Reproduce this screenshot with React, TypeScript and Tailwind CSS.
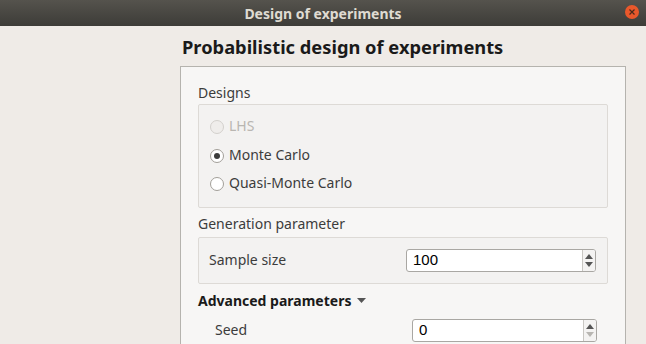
import { useState } from 'react'

const font = { fontFamily: '"Noto Sans", "Open Sans", sans-serif' }

const Radio = ({
  label,
  checked,
  disabled,
  onClick,
}: {
  label: string
  checked?: boolean
  disabled?: boolean
  onClick?: () => void
}) => (
  <div
    className={`flex items-center h-[28.5px] gap-[5px] ${disabled ? 'text-[#b9b6b1]' : 'text-[#3c3c3c] cursor-pointer'}`}
    onClick={disabled ? undefined : onClick}
  >
    <span
      className={`w-[14px] h-[14px] rounded-full border flex items-center justify-center ${
        disabled ? 'border-[#d3d0cc] bg-[#efedeb]' : 'border-[#a29f99] bg-white'
      }`}
    >
      {checked && <span className="w-[6px] h-[6px] rounded-full bg-[#3c3c3c]" />}
    </span>
    <span className="text-[14px] leading-[20px] -mt-[2px]">{label}</span>
  </div>
)

const SpinBox = ({ value, dimDown, w }: { value: string; dimDown?: boolean; w: string }) => (
  <div className={`flex ${w} h-[23px] border border-[#a9a7a3] rounded-[3px] bg-white overflow-hidden`}>
    <div
      className="flex-1 flex items-center pl-[6px] text-[15px] text-black"
      style={{ fontFamily: '"Liberation Sans", Arial, sans-serif' }}
    >
      {value}
    </div>
    <div className="w-[13px] border-l border-[#c9c7c3] bg-[#f4f3f2] flex flex-col items-center justify-center gap-[3px]">
      <svg width="8" height="5" viewBox="0 0 8 5">
        <path d="M0 5 L4 0 L8 5 Z" fill="#555" />
      </svg>
      <svg width="8" height="5" viewBox="0 0 8 5">
        <path d="M0 0 L4 5 L8 0 Z" fill={dimDown ? '#b8b6b2' : '#555'} />
      </svg>
    </div>
  </div>
)

export default function App() {
  const [design, setDesign] = useState('mc')

  return (
    <div className="w-[646px] h-[344px] overflow-hidden bg-[#efebe7] flex flex-col" style={font}>
      <div className="h-[26px] shrink-0 bg-gradient-to-b from-[#55534d] to-[#3d3c38] flex items-center relative">
        <div className="flex-1 text-center text-[14px] font-bold text-[#dfdbd2]">Design of experiments</div>
        <div className="absolute right-[7px] top-[5px] w-[14px] h-[14px] rounded-full bg-[#e9582b] flex items-center justify-center">
          <svg width="6" height="6" viewBox="0 0 6 6">
            <path d="M0.5 0.5 L5.5 5.5 M5.5 0.5 L0.5 5.5" stroke="#4a2a1a" strokeWidth="1.2" />
          </svg>
        </div>
      </div>

      <div className="flex-1 flex pl-[180px] pr-[20px]">
        <div className="flex-1 flex flex-col">
          <h1 className="pl-[2px] mt-[9px] h-[31px] text-[18.3px] font-bold text-[#1a1a1a] leading-[24px]">
            Probabilistic design of experiments
          </h1>
          <div className="flex-1 border border-[#b5b3ae] border-b-0 bg-[#f7f6f5] px-[17px] pt-[16px] text-[#3c3c3c]">
            <div className="text-[14px] leading-[20px] h-[21px]">Designs</div>
            <div className="border border-[#dddad6] bg-[#f3f2f1] rounded-[2px] h-[104px] pl-[11px] pt-[8px]">
              <Radio label="LHS" disabled />
              <Radio label="Monte Carlo" checked={design === 'mc'} onClick={() => setDesign('mc')} />
              <Radio label="Quasi-Monte Carlo" checked={design === 'qmc'} onClick={() => setDesign('qmc')} />
            </div>
            <div className="text-[14px] leading-[20px] mt-[6px] h-[23px]">Generation parameter</div>
            <div className="border border-[#dddad6] bg-[#f3f2f1] rounded-[2px] h-[47px] flex items-center pl-[10px] pr-[11px]">
              <div className="flex-1 text-[14px] -mt-[2px]">Sample size</div>
              <SpinBox value="100" w="w-[190px]" />
            </div>
            <div className="flex items-center gap-[6px] mt-[6px] h-[20px] text-[14px] font-bold text-[#1a1a1a]">
              Advanced parameters
              <svg width="9" height="5" viewBox="0 0 9 5">
                <path d="M0 0 L9 0 L4.5 5 Z" fill="#555" />
              </svg>
            </div>
            <div className="flex items-center mt-[9px] pl-[17px] pr-[11px]">
              <div className="flex-1 text-[14px] -mt-[2px]">Seed</div>
              <SpinBox value="0" dimDown w="w-[185px]" />
            </div>
          </div>
        </div>
      </div>
    </div>
  )
}
